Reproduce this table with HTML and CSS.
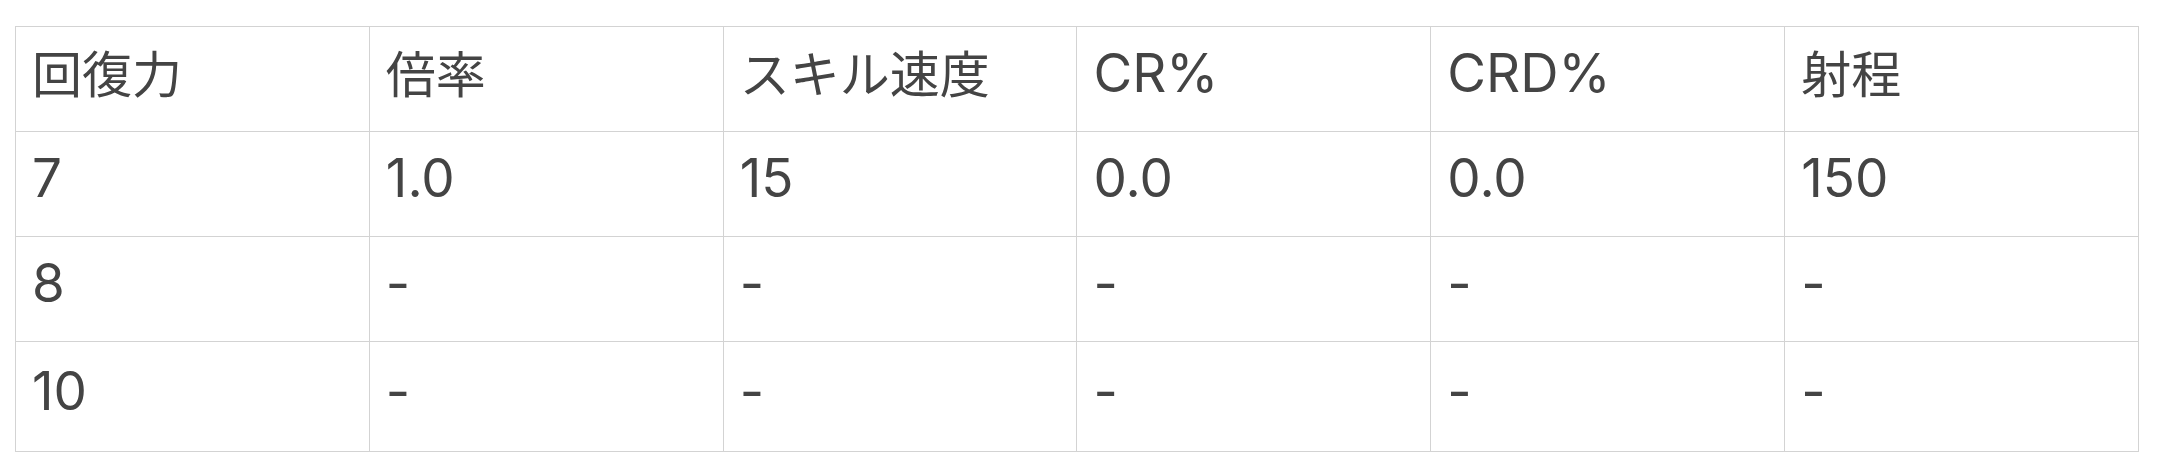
FILE: index.html
```html
<!DOCTYPE html>
<html lang="ja">
<head>
<meta charset="utf-8">
<title>Table</title>
<link rel="stylesheet" href="styles.css">
</head>
<body>
<div class="wrap">
<table class="stats">
<thead>
<tr><th><span class="ja">回復力</span></th><th><span class="ja">倍率</span></th><th><span class="ja">スキル速度</span></th><th>CR%</th><th>CRD%</th><th><span class="ja">射程</span></th></tr>
</thead>
<tbody>
<tr><td>7</td><td>1.0</td><td>15</td><td>0.0</td><td>0.0</td><td>150</td></tr>
<tr><td>8</td><td>-</td><td>-</td><td>-</td><td>-</td><td>-</td></tr>
<tr class="last"><td>10</td><td>-</td><td>-</td><td>-</td><td>-</td><td>-</td></tr>
</tbody>
</table>
</div>
</body>
</html>
```
FILE: styles.css
```css
html, body {
  margin: 0;
  padding: 0;
  background: #ffffff;
}
.wrap {
  padding: 26px 25px 0 15px;
}
.stats {
  width: 2124px;
  border-collapse: collapse;
  table-layout: fixed;
  font-family: Inter, "Noto Sans CJK JP", sans-serif;
  font-size: 53px;
  color: #444444;
}
.stats th,
.stats td {
  border: 1px solid #d3d3d3;
  height: 94px;
  padding: 0 16px 10px 16px;
  text-align: left;
  vertical-align: middle;
  font-weight: 400;
  line-height: 1.2;
  white-space: nowrap;
}
.stats tr.last td {
  height: 99px;
}
.ja {
  font-family: "Noto Sans CJK JP", sans-serif;
  font-size: 50px;
}
```
